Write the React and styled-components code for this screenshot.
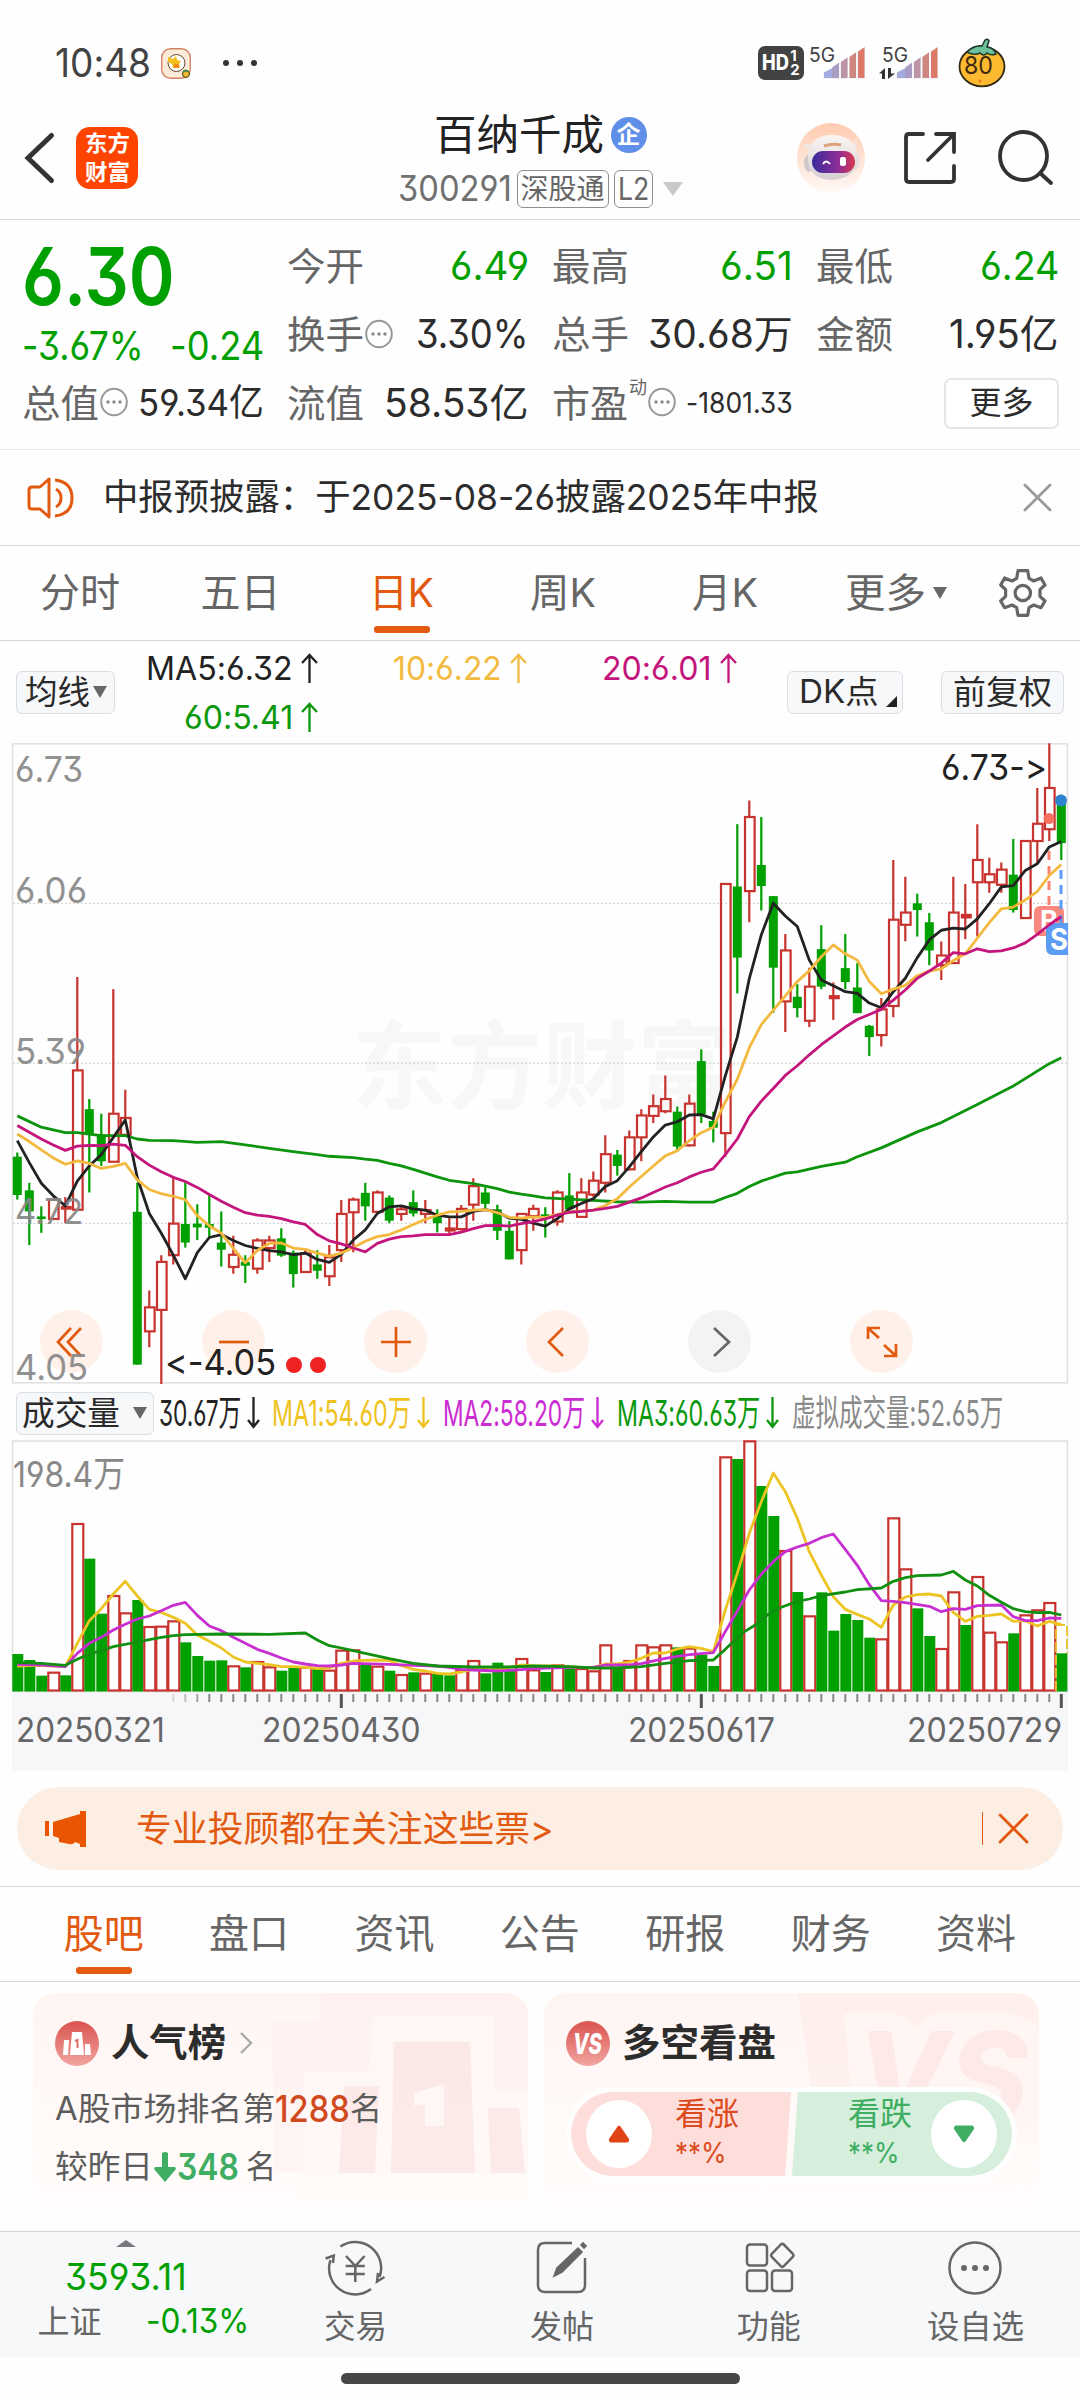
import React, { useLayoutEffect, useRef, useState } from "react";
import styled, { createGlobalStyle } from "styled-components";

const GREEN = "#00a000";
const ORANGE = "#e25a10";
const RED = "#c8332f";
const GREY = "#666";
const FONT = `Inter, "Noto Sans CJK SC", sans-serif`;

const GlobalStyle = createGlobalStyle`
  * { box-sizing: border-box; }
  body {
    margin: 0;
    background: #fff;
    color: #2c2c2c;
    font-family: ${FONT};
    font-feature-settings: "cv03", "cv04", "cv09", "calt" 0;
    font-weight: 400;
  }
  svg { display: block; flex: none; overflow: visible; }
`;

const Screen = styled.div`
  width: 1080px;
  height: 2400px;
  overflow: hidden;
  background: #fefefe;
`;

const FitBox = styled.span`
  display: block;
  flex: none;
  width: ${p => p.$w}px;
  height: 1.3em;
  line-height: 1.3em;
  font-size: ${p => p.$s}px;
  font-weight: ${p => p.$b || 400};
  color: ${p => p.$c || "inherit"};
  white-space: nowrap;
`;

const FitInner = styled.span`
  display: inline-block;
  transform-origin: 0 50%;
`;

// one line of text squeezed or stretched to the width of its slot
const Fit = ({ w, s, c, b, children }) => {
  const ref = useRef(null);
  const [scale, setScale] = useState(1);
  useLayoutEffect(() => {
    setScale(w / ref.current.offsetWidth);
  }, [w, children]);
  return (
    <FitBox $w={w} $s={s} $c={c} $b={b}>
      <FitInner ref={ref} style={{ transform: `scaleX(${scale})` }}>
        {children}
      </FitInner>
    </FitBox>
  );
};

const Flex = styled.div`
  display: flex;
  align-items: center;
  gap: ${p => p.$gap || 0}px;
  margin-left: ${p => p.$ml || 0}px;
`;

/* ---------- status bar ---------- */

const StatusBar = styled.div`
  display: flex;
  align-items: center;
  justify-content: space-between;
  height: 100px;
  padding: 26px 74px 0 55px;
  color: #424242;
`;

const HdBadge = styled.div`
  display: flex;
  align-items: center;
  justify-content: center;
  gap: 1px;
  width: 46px;
  height: 34px;
  border-radius: 7px;
  background: #424242;
  color: #fff;
`;

const HdDigits = styled.div`
  font-size: 15px;
  line-height: 14px;
  font-weight: 700;
`;

const Signals = styled(Flex)`
  gap: 16px;
  margin: 0 19px 0 5px;
`;

const barColors = ["#a3abe0", "#ab9cc6", "#bd93a8", "#cf8580", "#de7868"];

const Signal = ({ data }) => (
  <svg width="57" height="34" viewBox="0 0 57 34">
    <text x="0" y="16" fontSize="20" fill="#424242" textLength="26" lengthAdjust="spacingAndGlyphs">5G</text>
    {data && <path d="M-3 27.500l6-5.500v11h-3v-5.500zM6 22h3v5.500h4l-7 5.500z" fill="#333" />}
    {barColors.map((c, i) => (
      <path
        key={c}
        d={`M${15 + i * 8.5} 32V${26.5 - i * 5.2}l${i === 0 ? 9 : 6.5}-4.500V32z`}
        fill={c}
        stroke="#9993"
      />
    ))}
  </svg>
);

const AppBubble = () => (
  <svg width="30" height="31" viewBox="0 0 30 31">
    <rect x=".7" y=".7" width="28.600" height="29.600" rx="9" fill="#fdebd9" stroke="#cf8468" strokeWidth="1.400" />
    <circle cx="15.500" cy="15" r="8.500" fill="#fff" stroke="#6b4436" strokeWidth="1" />
    <path d="M7 9l5 2 3-3 1 4 4 1-2 3 1 4h-7l-1-4-4-2z" fill="#f5bd1c" />
    <rect x="13" y="16" width="5" height="4" fill="#f08a1a" />
    <circle cx="25" cy="26" r="3.500" fill="#f2b632" stroke="#473c17" />
    <path d="M22 24q3-3 5 0" stroke="#3a8a4b" strokeWidth="2" fill="none" />
  </svg>
);

const Battery = () => (
  <svg width="48" height="50" viewBox="0 0 48 50">
    <ellipse cx="24" cy="28.500" rx="22.500" ry="19.800" fill="#fdb92f" stroke="#332a14" strokeWidth="1.800" />
    <path d="M9 14q7-7 15-6l3-6q3-2 4 1l-2 6q7 1 9 7-5 2-9-1-3 4-7 0-6 3-13-1z" fill="#6cc09a" stroke="#22382c" strokeWidth="1.500" />
    <circle cx="22" cy="43" r="1.500" fill="#f07b1c" />
    <circle cx="12" cy="35" r="1.500" fill="#f07b1c" />
    <text x="6" y="36" fontSize="24" fill="#3d2a10" textLength="29" lengthAdjust="spacingAndGlyphs">80</text>
  </svg>
);

/* ---------- header ---------- */

const Header = styled.header`
  display: flex;
  align-items: center;
  height: 120px;
  padding-bottom: 3px;
  border-bottom: 1px solid #d6d6d6;
`;

const HeaderLeft = styled(Flex)`
  width: 300px;
  padding-left: 24px;
  gap: 21px;
`;

const HeaderRight = styled(Flex)`
  width: 300px;
  padding-left: 17px;
`;

const HeaderTitle = styled.div`
  width: 480px;
  padding-top: 8px;
`;

const TitleLine = styled(Flex)`
  height: 54px;
  justify-content: center;
`;

const Logo = styled.div`
  display: flex;
  flex-direction: column;
  align-items: center;
  justify-content: center;
  width: 62px;
  height: 62px;
  border-radius: 14px;
  background: #ff4400;
  color: #fff;
`;

const CorpBadge = styled.div`
  display: flex;
  align-items: center;
  justify-content: center;
  width: 36px;
  height: 36px;
  margin-left: 7px;
  border-radius: 50%;
  background: #5f8fe8;
  color: #fff;
`;

const Tag = styled.div`
  display: flex;
  align-items: center;
  justify-content: center;
  width: ${p => p.$w}px;
  height: 38px;
  margin-left: 5px;
  border: 1.500px solid #8f8f8f;
  border-radius: 6px;
`;

const Triangle = styled.i`
  flex: none;
  width: 0;
  height: 0;
  border: solid transparent;
  border-width: ${p => p.$h}px ${p => p.$w / 2}px 0;
  border-top-color: ${p => p.$c || GREY};
  margin-left: ${p => p.$ml || 0}px;
`;

const Robot = () => (
  <svg width="68" height="70" viewBox="0 0 68 70">
    <defs>
      <linearGradient id="rbg" x1="0" y1="0" x2="0" y2="1">
        <stop offset="0" stopColor="#ffcbb0" />
        <stop offset="1" stopColor="#fff9f6" />
      </linearGradient>
      <linearGradient id="visor">
        <stop offset="0" stopColor="#3a2d9c" />
        <stop offset=".6" stopColor="#8b2c96" />
        <stop offset="1" stopColor="#d93850" />
      </linearGradient>
      <linearGradient id="helmet" x1="0" y1="0" x2="0" y2="1">
        <stop offset="0" stopColor="#fbf6f3" />
        <stop offset="1" stopColor="#d5cfd2" />
      </linearGradient>
    </defs>
    <ellipse cx="34" cy="35" rx="34" ry="35" fill="url(#rbg)" />
    <path d="M7 20q0 7 6 8l5-7q-6 2-11-1zM59 15q-1 6-7 6l4 8q6-5 3-14z" fill="#f3e6e0" />
    <ellipse cx="12" cy="40" rx="5" ry="9" fill="#cfc8cc" />
    <ellipse cx="58" cy="38" rx="5" ry="9" fill="#e9dedd" />
    <path d="M11 36q0-23 23-24 25 0 26 22 1 21-25 23-24-1-24-21z" fill="url(#helmet)" />
    <rect x="15" y="28" width="43" height="22" rx="11" fill="url(#visor)" />
    <path d="M26 41q3-5 7 0" stroke="#fff" strokeWidth="2" fill="none" />
    <rect x="43" y="34" width="6" height="9" rx="2" fill="#fff" />
    <path d="M27 23q9-3 17-1" stroke="#dca179" strokeWidth="3" fill="none" />
  </svg>
);

/* ---------- quote ---------- */

const Quote = styled.section`
  display: grid;
  grid-template-columns: 242px 242px 241px 243px;
  grid-template-rows: repeat(3, 68.500px);
  column-gap: 23px;
  height: 230px;
  padding: 12px 21px 0 22px;
  border-bottom: 1px solid #ebebeb;
`;

const PriceCell = styled.div`
  grid-row: span 2;
  color: ${GREEN};
`;

const PriceLine = styled(Flex)`
  justify-content: space-between;
  height: ${p => p.$h}px;
`;

const Cell = styled(Flex)`
  justify-content: space-between;
`;

const Sup = styled.span`
  align-self: flex-start;
  margin: -3px 0 0 1px;
`;

const MoreButton = styled.button`
  display: flex;
  align-items: center;
  justify-content: center;
  width: 115px;
  height: 51px;
  margin-left: auto;
  border: 2px solid #e6e6e8;
  border-radius: 7px;
  background: #fff;
  color: #2c2c2c;
  font: inherit;
`;

const Hint = () => (
  <svg width="28" height="30" viewBox="0 0 28 30">
    <ellipse cx="15" cy="14" rx="12.800" ry="13.300" fill="none" stroke="#999" strokeWidth="2" />
    <circle cx="9" cy="14" r="1.700" fill="#888" />
    <circle cx="15" cy="14" r="1.700" fill="#888" />
    <circle cx="21" cy="14" r="1.700" fill="#888" />
  </svg>
);

const quoteCells = [
  { label: "今开", value: "6.49", w: 79, color: GREEN },
  { label: "最高", value: "6.51", w: 73, color: GREEN },
  { label: "最低", value: "6.24", w: 79, color: GREEN },
  { label: "换手", value: "3.30%", w: 113, hint: true },
  { label: "总手", value: "30.68万", w: 145 },
  { label: "金额", value: "1.95亿", w: 110 },
  { label: "总值", value: "59.34亿", w: 126, size: 37, hint: true },
  { label: "流值", value: "58.53亿", w: 145 }
];

/* ---------- notice and tabs ---------- */

const Notice = styled.section`
  display: flex;
  align-items: center;
  height: 96px;
  padding: 0 28px 0 27px;
  border-bottom: 1px solid #d6d6d6;
`;

const NoticeText = styled.div`
  flex: 1;
  padding-left: 28px;
`;

const Periods = styled.nav`
  display: flex;
  height: 95px;
  border-bottom: 1px solid #d6d6d6;
  color: ${GREY};
`;

const Tab = styled.div`
  position: relative;
  display: flex;
  align-items: center;
  justify-content: center;
  width: ${p => p.$w}px;
  color: ${p => (p.$active ? ORANGE : GREY)};
  &::after {
    content: "";
    display: ${p => (p.$active ? "block" : "none")};
    position: absolute;
    bottom: 7.500px;
    left: calc(50% - 28px);
    width: 56px;
    height: 6.500px;
    border-radius: 3px;
    background: ${ORANGE};
  }
`;

const MorePeriods = styled(Flex)`
  width: 155px;
  margin-left: 40px;
`;

const GearIcon = styled.svg`
  align-self: center;
`;

const Gear = () => (
  <GearIcon width="47" height="50" viewBox="0 0 47 50" fill="none" stroke="#666" strokeWidth="3.200">
    <path
      d="M18 2.700H27.700L29 10.300L33.700 13L41 10L45 17L40 21.700V28.300L45 33L41 39.700L33.700 37L29 39.700L27.700 47.300H18L16.700 39.700L12 37L4.600 39.700L.7 33L5.600 28.300V21.700L.7 17L4.600 10L12 13L16.700 10.300Z"
      strokeLinejoin="round"
    />
    <circle cx="22.800" cy="25" r="7.700" />
  </GearIcon>
);

const Cross = ({ size, color, stroke }) => (
  <svg width={size} height={size} viewBox="0 0 30 30">
    <path d="M2 2l26 26M28 2L2 28" stroke={color} strokeWidth={stroke} strokeLinecap="round" />
  </svg>
);

/* ---------- moving averages bar ---------- */

const MaBar = styled.section`
  display: flex;
  align-items: center;
  height: 102px;
  padding: 0 16px;
`;

const Chip = styled.button`
  display: flex;
  align-items: center;
  flex: none;
  width: ${p => p.$w}px;
  height: 43px;
  padding: 0 0 0 ${p => p.$pl}px;
  margin-left: ${p => p.$ml || 0}px;
  border: 1.500px solid #dbdee2;
  border-radius: 6px;
  background: #f7f8fa;
  color: #2a2a2a;
  font: inherit;
`;

const Corner = styled.i`
  margin: 19px 0 0 9px;
  border: solid transparent;
  border-width: 0 0 11px 11px;
  border-bottom-color: #222;
`;

const MaLegend = styled.div`
  display: grid;
  grid-template-columns: 203px 209px 210px;
  grid-auto-rows: 49px;
  align-items: center;
  justify-items: end;
  padding-top: 1px;
`;

const LegendItem = styled(Flex)`
  color: ${p => p.$c};
`;

const Arrow = ({ down, w, h }) => (
  <svg width={w} height={h} viewBox={`0 0 ${w} ${h}`}>
    <path
      d={down ? `M${w / 2} 0V${h - 2}M1 ${h - 9}L${w / 2} ${h - 2}L${w - 1} ${h - 9}` : `M${w / 2} ${h}V2M1 10L${w / 2} 2L${w - 1} 10`}
      fill="none" stroke="currentColor" strokeWidth="2.300"
    />
  </svg>
);

const maLegend = [
  { text: "MA5:6.32", w: 147, c: "#222" },
  { text: "10:6.22", w: 109, c: "#f3ba42" },
  { text: "20:6.01", w: 110, c: "#c4157c" },
  { text: "60:5.41", w: 109, c: "#0c980c" }
];

/* ---------- candle chart ---------- */

// kind, high, body top, body bottom, low
const candles = `g 980 990 1081 1092|g 1052 1070 1120 1200|g 1108 1132 1138 1171|r 1092 1092 1138 1138|s 1086 1107 1116 1148
r 563 785 1116 1116|g 853 877 935 1075|g 888 937 1001 1012|r 592 888 1002 1002|r 831 898 938 938
g 1052 1121 1484 1484|r 1308 1348 1405 1443|r 1224 1240 1354 1530|r 1040 1149 1224 1246|g 1050 1150 1194 1206
g 1103 1149 1158 1188|g 1080 1150 1159 1182|g 1120 1194 1211 1251|r 1178 1223 1252 1268|g 1224 1240 1249 1290
r 1184 1189 1256 1268|r 1178 1189 1207 1240|g 1160 1184 1225 1228|g 1213 1218 1269 1301|r 1208 1220 1264 1264
g 1212 1246 1261 1280|r 1200 1229 1274 1297|r 1093 1126 1212 1240|r 1087 1092 1122 1217|g 1052 1076 1108 1142
r 1070 1075 1121 1121|g 1082 1087 1142 1148|r 1109 1115 1126 1142|g 1070 1098 1125 1132|r 1093 1117 1126 1148
g 1115 1132 1148 1170|s 1136 1158 1168 1176|r 1105 1114 1162 1166|r 1041 1060 1104 1142|g 1063 1075 1102 1115
g 1104 1115 1166 1188|g 1143 1166 1234 1234|r 1125 1126 1212 1246|r 1104 1114 1131 1166|g 1110 1127 1131 1182
r 1070 1075 1144 1154|g 1029 1082 1115 1115|r 1041 1075 1133 1133|r 1025 1047 1080 1085|r 939 984 1052 1075
g 974 985 1012 1035|r 928 944 1020 1023|r 877 892 944 1001|r 842 870 893 910|r 797 853 882 887
g 871 883 966 974|r 842 864 963 966|g 735 763 889 910|g 883 905 921 956|r 340 342 934 990
g 200 348 517 602|r 144 183 359 433|g 183 297 347 405|g 371 371 541 648|r 461 500 621 694
g 580 610 637 659|r 541 586 667 682|g 440 497 586 592|s 576 606 616 665|g 461 542 575 592
g 530 588 649 649|g 677 679 706 751|r 613 640 701 728|r 285 427 632 659|r 325 410 439 478
g 365 388 404 467|g 411 433 500 535|r 479 512 535 570|r 325 410 530 530|s 342 413 424 473
r 200 285 338 467|r 280 319 338 363|r 291 308 344 363|g 235 320 404 410|r 240 240 423 423
r 114 199 240 292|r 8 114 212 240|g 130 150 245 285`
  .split(/[|\n]/)
  .map(row => {
    const [kind, ...v] = row.split(" ");
    return { kind, v: v.map(Number) };
  });

const ma5 = [952,1004,1053,1083,1107,1048,1012,985,944,903,1040,1125,1172,1224,1280,1218,1182,1175,1189,1201,1208,1213,1216,1223,1219,1234,1241,1222,1188,1164,1125,1109,1107,1114,1117,1129,1133,1133,1120,1116,1121,1136,1139,1148,1155,1137,1114,1101,1090,1061,1047,1014,978,943,915,907,891,890,900,798,706,567,463,388,418,443,523,570,584,598,602,625,636,598,566,517,475,452,447,449,425,389,349,346,310,294,254,241];
const ma10 = [936,954,974,993,1008,1000,1006,1018,1013,1006,1045,1068,1078,1084,1092,1130,1154,1172,1208,1242,1213,1196,1195,1207,1210,1219,1226,1219,1206,1191,1180,1175,1164,1151,1139,1129,1121,1120,1117,1116,1123,1134,1136,1133,1135,1127,1122,1119,1117,1106,1090,1062,1037,1012,988,976,952,933,920,860,806,731,676,642,608,574,548,515,487,508,523,574,603,592,583,560,549,544,524,508,471,434,401,397,380,360,322,296];
const ma20 = [916,932,948,962,975,965,963,964,960,963,990,1010,1026,1039,1049,1063,1080,1096,1110,1123,1129,1132,1137,1145,1151,1175,1190,1197,1207,1216,1196,1186,1180,1178,1175,1175,1175,1169,1161,1154,1153,1155,1149,1144,1138,1129,1122,1120,1117,1113,1108,1098,1088,1075,1062,1052,1038,1027,1019,985,948,895,858,828,797,774,748,724,703,682,664,652,640,618,594,566,549,530,505,508,496,503,501,494,482,462,439,420];
const ma60 = [[0,893],[2,920],[4,933],[5,933],[7,940],[9,940],[10,948],[11,951],[13,952],[15,956],[17,954],[19,962],[21,970],[23,978],[25,985],[26,989],[28,992],[29,996],[30,999],[31,1006],[32,1012],[33,1020],[34,1029],[35,1038],[36,1046],[38,1054],[39,1060],[40,1066],[41,1074],[42,1079],[43,1083],[44,1088],[46,1091],[48,1094],[50,1097],[52,1098],[54,1096],[56,1098],[58,1098],[59,1087],[60,1077],[61,1061],[62,1048],[64,1029],[65,1026],[67,1013],[69,1003],[70,990],[72,969],[75,931],[77,909],[80,866],[83,822],[86,769],[87,755]];

const volumes = [822,840,887,878,886,432,536,701,648,700,660,741,740,724,787,828,842,841,859,862,846,862,872,860,863,866,872,812,811,850,860,872,885,877,881,882,886,872,843,880,848,872,837,871,876,856,865,867,874,796,860,843,796,802,796,802,806,824,858,232,237,184,318,408,513,636,709,637,752,702,720,773,778,415,568,685,768,807,637,735,591,758,787,760,706,691,669,820];
const vma1 = [858,857,857,858,860,790,722,686,642,604,648,688,697,712,730,765,784,804,831,846,850,854,860,860,862,866,864,850,843,841,840,842,856,868,873,880,882,876,868,868,870,862,855,858,858,858,860,862,862,852,852,846,835,819,819,807,800,805,815,690,580,460,365,279,335,415,515,585,650,688,703,717,742,675,651,644,642,648,697,724,709,706,702,724,722,738,724,734];
const vma2 = [[0,853],[2,855],[4,860],[5,820],[6,790],[7,772],[8,750],[9,733],[10,717],[11,708],[12,692],[13,676],[14,667],[15,706],[16,738],[17,752],[18,772],[19,790],[20,808],[21,820],[22,834],[23,846],[24,852],[25,857],[26,858],[27,855],[28,850],[31,853],[33,856],[35,858],[36,862],[37,868],[38,870],[40,873],[42,869],[43,866],[46,862],[48,862],[49,855],[51,855],[52,851],[54,835],[55,829],[56,824],[58,818],[59,755],[60,693],[61,630],[62,583],[63,545],[64,515],[65,501],[66,490],[67,473],[68,462],[69,508],[70,556],[71,614],[72,662],[73,664],[74,668],[76,679],[77,695],[78,686],[79,688],[80,677],[82,675],[83,710],[84,722],[85,722],[86,714],[87,715]];
const vma3 = [[0,848],[2,850],[4,856],[5,838],[6,822],[7,812],[8,800],[10,786],[11,779],[12,772],[13,767],[14,764],[17,762],[21,763],[24,759],[25,780],[26,797],[27,804],[28,812],[29,820],[31,836],[33,850],[35,858],[38,861],[41,861],[43,858],[46,860],[48,864],[50,864],[52,860],[54,850],[56,842],[58,840],[59,808],[60.5,757],[61.5,735],[62.5,705],[63.5,684],[65,664],[66,657],[67,647],[69,636],[70,629],[72,624],[73,604],[74,593],[75,587],[77,585],[78,574],[79,600],[80,618],[81,646],[82,667],[83,686],[84,695],[85,698],[86,697],[87,705]];

const cx = i => 17.3 + i * 12;
const py = v => v * 0.4209 - 3;
const vy = v => v / 3 - 60;
const points = (list, y) =>
  list.map((p, i) => (Array.isArray(p) ? `${cx(p[0])},${y(p[1])}` : `${cx(i)},${y(p)}`)).join(" ");

const ChartBox = styled.section`
  position: relative;
  height: 641px;
`;

const Line = styled.polyline`
  fill: none;
  stroke-width: 2.800px;
  stroke-linejoin: round;
`;

const ControlRow = styled.div`
  position: absolute;
  left: 40px;
  bottom: 11px;
  display: flex;
  gap: 99px;
`;

const Round = styled.div`
  display: flex;
  align-items: center;
  justify-content: center;
  width: 63px;
  height: 63px;
  border-radius: 50%;
  background: ${p => (p.$off ? "#f3f3f3" : "#fff1e9")};
  color: ${p => (p.$off ? "#666" : ORANGE)};
`;

const controls = [
  { d: "M15 2L2 16L15 30M25 2L12 16L25 30" },
  { d: "M1 16H31" },
  { d: "M1 16H31M16 1V31" },
  { d: "M21 2L7 16L21 30" },
  { d: "M10 2L25 16L10 30", off: true },
  { d: "M2 13V2H14M3 3L13 12M18 19L29 29M30 18V30H18" }
];

const Controls = () => (
  <ControlRow>
    {controls.map(({ d, off }) => (
      <Round key={d} $off={off}>
        <svg width="32" height="32" viewBox="0 0 32 32">
          <path d={d} fill="none" stroke="currentColor" strokeWidth="2.700" />
        </svg>
      </Round>
    ))}
  </ControlRow>
);

const ChartText = ({ x, y, w, s = 36, fill = "#888", children, ...rest }) => (
  <text x={x} y={y} fontSize={s} fill={fill} textLength={w} lengthAdjust="spacingAndGlyphs" {...rest}>
    {children}
  </text>
);

const Candle = ({ i, kind, v }) => {
  const [high, top, bottom, low] = v.map(py);
  const x = cx(i);
  const color = kind === "g" ? GREEN : RED;
  if (kind === "r") {
    return (
      <g stroke={color} strokeWidth="2.200" fill="none">
        <path d={`M${x} ${high}V${top}M${x} ${bottom}V${low}`} />
        <rect x={x - 4.3} y={top} width="9.600" height={Math.max(bottom - top, 1)} />
      </g>
    );
  }
  return (
    <g fill={color}>
      <rect x={x - 1.1} y={high} width="2.200" height={low - high} />
      <rect x={x - 4.5} y={top} width={kind === "s" ? 11 : 9} height={bottom - top} />
    </g>
  );
};

const KChart = () => (
  <svg width="1080" height="641" viewBox="0 0 1080 641">
    <text x="352" y="358" fontSize="96" fontWeight="700" fill="#f7f7f7" textLength="380" lengthAdjust="spacingAndGlyphs">东方财富</text>
    {[160.3, 320.2, 480.3].map(y => (
      <path key={y} d={`M13 ${y}H1067`} stroke="#ccc" strokeWidth="1" strokeDasharray="2 2" />
    ))}
    <rect x="12.500" y=".8" width="1055" height="639" fill="none" stroke="#e2e2e2" strokeWidth="1.600" />
    {candles.map((c, i) => <Candle key={i} i={i} {...c} />)}
    <path d="M1049 108V164" stroke="#f98272" strokeWidth="3" strokeDasharray="9 6" />
    <rect x="1034" y="163" width="30" height="30" rx="6" fill="#f87b70" opacity=".9" />
    <ChartText x="1040" y="188" w="18" s="29" fill="#fff" fontWeight="700">B</ChartText>
    <path d="M1068 180h-15q-7 0-7 7v18q0 7 7 7h15z" fill="#5c9cf5" />
    <path d="M1061 127V184" stroke="#5c9cf5" strokeWidth="3" strokeDasharray="9 6" />
    <ChartText x="1050" y="207" w="18" s="30" fill="#fff" fontWeight="700">S</ChartText>
    <Line points={points(ma60, py)} stroke="#0c940c" />
    <Line points={points(ma5, py)} stroke="#222" />
    <Line points={points(ma10, py)} stroke="#f3b93f" />
    <Line points={points(ma20, py)} stroke="#c4157c" />
    <circle cx="1049" cy="75.500" r="5.500" fill="#f8705f" />
    <circle cx="1061" cy="57.500" r="6" fill="#2f83cf" />
    <g opacity=".92">
      <ChartText x="15" y="39" w="68">6.73</ChartText>
      <ChartText x="15" y="160" w="72">6.06</ChartText>
      <ChartText x="15" y="321" w="71">5.39</ChartText>
      <ChartText x="15" y="481" w="68">4.72</ChartText>
    </g>
    <ChartText x="941" y="37" w="106" fill="#222">6.73-&gt;</ChartText>
  </svg>
);

// labels that stay above the round buttons
const ChartOverlay = styled.svg`
  position: absolute;
  left: 0;
  bottom: 0;
`;

/* ---------- volume ---------- */

const VolumeBar = styled.section`
  display: flex;
  align-items: center;
  height: 56px;
  padding: 2px 0 0 16px;
`;

const VolumeLegend = styled(Flex)`
  gap: 6px;
  margin-left: ${p => p.$ml}px;
  color: ${p => p.$c};
`;

const volumeLegend = [
  { text: "30.67万", w: 82, c: "#222", ml: 5 },
  { text: "MA1:54.60万", w: 139, c: "#efc31f", ml: 12 },
  { text: "MA2:58.20万", w: 142, c: "#cb2cd3", ml: 13 },
  { text: "MA3:60.63万", w: 143, c: "#0c980c", ml: 13 }
];

const VolumeChart = () => (
  <svg width="1080" height="252" viewBox="0 0 1080 252">
    <rect x="12.500" y="1" width="1055" height="250.500" fill="none" stroke="#e2e2e2" strokeWidth="1.600" />
    {volumes.map((v, i) =>
      candles[i].kind === "r" ? (
        <rect key={i} x={cx(i) - 5} y={vy(v)} width="11" height={250.5 - vy(v)} fill="#fff" stroke={RED} strokeWidth="2.200" />
      ) : (
        <rect key={i} x={cx(i) - 5} y={vy(v)} width="11" height={251.5 - vy(v)} fill={GREEN} />
      )
    )}
    <path d="M1056 251V185H1067V213" fill="none" stroke="#eec32a" strokeWidth="1.800" strokeDasharray="10 3" />
    <Line points={points(vma1, vy)} stroke="#ecc524" />
    <Line points={points(vma2, vy)} stroke="#c72fd0" />
    <Line points={points(vma3, vy)} stroke="#108f10" />
    <ChartText x="13" y="47" w="112" s="36">198.4万</ChartText>
  </svg>
);

const TimeAxis = styled.section`
  height: 79px;
  margin: 0 12px;
  background: #f7f7fa;
`;

const Dates = styled.div`
  display: flex;
  align-items: center;
  height: 44px;
  padding-left: 4px;
  color: ${GREY};
`;

const Ticks = () => (
  <svg width="1056" height="16" viewBox="0 0 1056 16">
    {candles.map((_, i) => {
      if (i < 13) return null;
      const major = i === 27 || i === 57 || i === 87;
      return (
        <rect
          key={i}
          x={cx(i) - 12 - (major ? 1.5 : 1)}
          y="2"
          width={major ? 3 : 2}
          height={major ? 14 : 8}
          fill={major ? "#555" : "#888"}
          opacity={Math.min(1, (i - 12) * 0.25)}
        />
      );
    })}
  </svg>
);

/* ---------- promo, section tabs, cards ---------- */

const Promo = styled.section`
  display: flex;
  align-items: center;
  height: 83px;
  margin: 16px 17px;
  padding: 0 34px 0 27px;
  border-radius: 42px;
  background: #fdeee4;
  color: ${ORANGE};
`;

const PromoText = styled.div`
  flex: 1;
  padding: 1px 0 0 49px;
`;

const Divider = styled.i`
  width: 1.500px;
  height: 33px;
  margin-right: 15px;
  background: ${ORANGE};
`;

const Sections = styled.nav`
  display: flex;
  height: 96px;
  padding-left: 31px;
  border-top: 1px solid #d6d6d6;
  border-bottom: 1px solid #d6d6d6;
`;

const Cards = styled.section`
  display: flex;
  gap: 16px;
  height: 249px;
  padding: 11px 33px 0;
`;

const Card = styled.div`
  position: relative;
  width: 495px;
  height: 220px;
  padding: 28px 22px;
  border-radius: 22px;
  overflow: hidden;
  background: linear-gradient(#fff5f3, #fffdfc);
  color: #5c5c5c;
`;

const CardArt = styled.svg`
  position: absolute;
  top: 0;
  right: 0;
`;

const CardHead = styled(Flex)`
  position: relative;
  height: 44px;
  gap: 12px;
  color: #2c2c2c;
`;

const CardLine = styled(Flex)`
  position: relative;
  height: 58px;
  margin-top: ${p => p.$mt || 0}px;
`;

const VotePill = styled.div`
  position: relative;
  display: flex;
  width: 451px;
  height: 94px;
  margin-top: 22px;
  border: 5px solid rgba(255, 255, 255, 0.8);
  border-radius: 47px;
  background: #fff9f8;
  overflow: hidden;
`;

const Side = styled.div`
  display: flex;
  align-items: center;
  width: 220px;
  padding: 0 15px;
  color: ${p => p.$c};
  background: ${p => p.$bg};
  clip-path: ${p => p.$clip};
  margin-left: ${p => p.$ml || 0}px;
  justify-content: ${p => (p.$end ? "flex-end" : "flex-start")};
  gap: ${p => (p.$end ? 19 : 23)}px;
`;

const Knob = styled.div`
  display: flex;
  align-items: center;
  justify-content: center;
  width: 66px;
  height: 68px;
  border-radius: 50%;
  background: #fff;
`;

const VoteText = styled.div`
  display: flex;
  flex-direction: column;
  margin-top: -3px;
`;

const sectionTabs = ["股吧", "盘口", "资讯", "公告", "研报", "财务", "资料"];

/* ---------- bottom bar ---------- */

const BottomBar = styled.footer`
  display: flex;
  height: 126px;
  border-top: 1px solid #d3d5d8;
  background: #f7f8fa;
  color: ${GREY};
`;

const IndexBox = styled.div`
  display: flex;
  flex-direction: column;
  align-items: center;
  width: 252px;
  padding-top: 8px;
`;

const UpMark = styled.i`
  border: solid transparent;
  border-width: 0 10px 7px;
  border-bottom-color: #77787c;
`;

const IndexRow = styled(Flex)`
  height: ${p => p.$h}px;
  gap: 44px;
  padding-left: ${p => p.$pl || 0}px;
`;

const Action = styled.div`
  display: flex;
  flex-direction: column;
  align-items: center;
  width: 206.700px;
  padding-top: 8px;
`;

const ActionLabel = styled(Flex)`
  height: 63px;
`;

const HomeBar = styled.div`
  width: 399px;
  height: 11px;
  margin: 16px auto 0;
  border-radius: 6px;
  background: #464646;
`;

const actionIcons = {
  trade: (
    <>
      <path d="M16.400 6.500A26 26 0 0 1 55.500 37M47 49A26 26 0 0 1 6.500 20" />
      <path d="M1.600 18.500L9.800 15.500L9 23M60.500 37L53 41.500L54 33" />
      <path d="M22 16l9.300 10 9.300-10M31.300 26v16M21.600 26h19.200M21.600 34h19.200" />
    </>
  ),
  post: (
    <>
      <path d="M41 3H14Q7 3 7 10V45Q7 52 14 52H47Q54 52 54 45V18" />
      <path d="M23 36l3-8L47 8l4 4L31 32zM50 5l2-2 3 3-2 2z" fill="#666" strokeWidth="1.600" />
    </>
  ),
  apps: (
    <>
      <rect x="9" y="4.500" width="20" height="21" rx="3" />
      <rect x="9" y="30.500" width="20" height="20.500" rx="3" />
      <rect x="34" y="30.500" width="20" height="20.500" rx="3" />
      <path d="M42.800 4.500q1.500-1.500 3 0l9 9.300q1.500 1.500 0 3l-9 9.300q-1.500 1.500-3 0l-9-9.300q-1.500-1.500 0-3z" />
    </>
  ),
  more: (
    <>
      <circle cx="31" cy="28" r="25.500" />
      <g fill="#666" stroke="none">
        <circle cx="20" cy="28" r="3" />
        <circle cx="31" cy="28" r="3" />
        <circle cx="42" cy="28" r="3" />
      </g>
    </>
  )
};

const actions = [
  { icon: "trade", label: "交易", w: 63 },
  { icon: "post", label: "发帖", w: 64 },
  { icon: "apps", label: "功能", w: 64 },
  { icon: "more", label: "设自选", w: 97 }
];

const App = () => (
  <Screen>
    <GlobalStyle />
    <StatusBar>
      <Flex $gap={10}>
        <Fit w={96} s={39}>10:48</Fit>
        <Flex $gap={31}>
          <AppBubble />
          <svg width="36" height="8" viewBox="0 0 36 8" fill="#333">
            <circle cx="4" cy="4" r="3" />
            <circle cx="18" cy="4" r="3" />
            <circle cx="32" cy="4" r="3" />
          </svg>
        </Flex>
      </Flex>
      <Flex>
        <HdBadge>
          <Fit w={27} s={21} b={800}>HD</Fit>
          <HdDigits>1<br />2</HdDigits>
        </HdBadge>
        <Signals>
          <Signal />
          <Signal data />
        </Signals>
        <Battery />
      </Flex>
    </StatusBar>

    <Header>
      <HeaderLeft>
        <svg width="31" height="52" viewBox="0 0 31 52">
          <path d="M27.500 3.500L4 26L27.500 48.500" fill="none" stroke="#333" strokeWidth="5" strokeLinecap="round" />
        </svg>
        <Logo>
          <Fit w={45} s={22} b={700}>东方</Fit>
          <Fit w={45} s={22} b={700}>财富</Fit>
        </Logo>
      </HeaderLeft>
      <HeaderTitle>
        <TitleLine>
          <Fit w={170} s={42} c="#222">百纳千成</Fit>
          <CorpBadge><Fit w={24} s={24} b={700}>企</Fit></CorpBadge>
        </TitleLine>
        <TitleLine>
          <Fit w={114} s={35} c="#707070">300291</Fit>
          <Tag $w={92}><Fit w={84} s={28} c="#666">深股通</Fit></Tag>
          <Tag $w={39}><Fit w={31} s={31} c="#666">L2</Fit></Tag>
          <Triangle $w={20} $h={14} $c="#c9c9c9" $ml={10} />
        </TitleLine>
      </HeaderTitle>
      <HeaderRight>
        <Robot />
        <Flex $gap={38} $ml={37}>
          <svg width="56" height="56" viewBox="0 0 56 56" fill="none" stroke="#333" strokeWidth="3.800" strokeLinecap="round">
            <path d="M21 4H7Q4 4 4 7V49Q4 52 7 52H49Q52 52 52 49V36" />
            <path d="M34 4H52V22M51 5L26 30" />
          </svg>
          <svg width="58" height="58" viewBox="0 0 58 58" fill="none" stroke="#333" strokeWidth="3.800" strokeLinecap="round">
            <ellipse cx="27.500" cy="27" rx="23.500" ry="24" />
            <path d="M44 44L55 54" />
          </svg>
        </Flex>
      </HeaderRight>
    </Header>

    <Quote>
      <PriceCell>
        <PriceLine $h={88}><Fit w={153} s={80} b={600}>6.30</Fit></PriceLine>
        <PriceLine $h={52}>
          <Fit w={122} s={39}>-3.67%</Fit>
          <Fit w={94} s={39}>-0.24</Fit>
        </PriceLine>
      </PriceCell>
      {quoteCells.map(cell => (
        <Cell key={cell.label}>
          <Flex>
            <Fit w={77} s={38} c={GREY}>{cell.label}</Fit>
            {cell.hint && <Hint />}
          </Flex>
          <Fit w={cell.w} s={cell.size || 39} c={cell.color}>{cell.value}</Fit>
        </Cell>
      ))}
      <Cell>
        <Flex>
          <Fit w={76} s={38} c={GREY}>市盈</Fit>
          <Sup><Fit w={18} s={18} c={GREY}>动</Fit></Sup>
          <Hint />
        </Flex>
        <Fit w={107} s={28}>-1801.33</Fit>
      </Cell>
      <Cell>
        <MoreButton><Fit w={64} s={32}>更多</Fit></MoreButton>
      </Cell>
    </Quote>

    <Notice>
      <svg width="48" height="44" viewBox="0 0 48 44" fill="none" stroke={ORANGE} strokeWidth="3">
        <path d="M22 3V41L13 33H5Q2 33 2 30V14Q2 11 5 11H13Z" strokeLinejoin="round" />
        <path d="M29 13Q34 16 34 22T29 31M28 4Q45 6 45 22T28 40" />
      </svg>
      <NoticeText><Fit w={716} s={36}>中报预披露：于2025-08-26披露2025年中报</Fit></NoticeText>
      <Cross size={29} color="#999" stroke={2.8} />
    </Notice>

    <Periods>
      <Tab $w={160}><Fit w={80} s={40}>分时</Fit></Tab>
      <Tab $w={161}><Fit w={80} s={40}>五日</Fit></Tab>
      <Tab $w={161} $active><Fit w={65} s={40}>日K</Fit></Tab>
      <Tab $w={162}><Fit w={66} s={40}>周K</Fit></Tab>
      <Tab $w={161}><Fit w={66} s={40}>月K</Fit></Tab>
      <MorePeriods>
        <Fit w={81} s={40}>更多</Fit>
        <Triangle $w={14} $h={12} $ml={7} />
      </MorePeriods>
      <Gear />
    </Periods>

    <MaBar>
      <Chip $w={99} $pl={8}>
        <Fit w={65} s={33}>均线</Fit>
        <Triangle $w={14} $h={12} $ml={3} />
      </Chip>
      <MaLegend>
        {maLegend.map(({ text, w, c }) => (
          <LegendItem key={text} $c={c} $gap={8}>
            <Fit w={w} s={33}>{text}</Fit>
            <Arrow w={17} h={30} />
          </LegendItem>
        ))}
      </MaLegend>
      <Chip $w={116} $pl={9} $ml={50}><Fit w={80} s={32}>DK点</Fit><Corner /></Chip>
      <Chip $w={123} $pl={11} $ml={38}><Fit w={99} s={33}>前复权</Fit></Chip>
    </MaBar>

    <ChartBox>
      <KChart />
      <Controls />
      <ChartOverlay width="340" height="50" viewBox="0 0 340 50">
        <ChartText x="15" y="46" w="73" opacity=".92">4.05</ChartText>
        <ChartText x="165" y="41" w="111" fill="#222">&lt;-4.05</ChartText>
        <circle cx="294" cy="31" r="8" fill="#f02222" />
        <circle cx="318" cy="31" r="8" fill="#f02222" />
      </ChartOverlay>
    </ChartBox>

    <VolumeBar>
      <Chip $w={138} $pl={5}>
        <Fit w={98} s={33}>成交量</Fit>
        <Triangle $w={14} $h={12} $ml={13} />
      </Chip>
      {volumeLegend.map(item => (
        <VolumeLegend key={item.text} $c={item.c} $ml={item.ml}>
          <Fit w={item.w} s={36}>{item.text}</Fit>
          <Arrow down w={13} h={32} />
        </VolumeLegend>
      ))}
      <VolumeLegend $ml={13} $c="#8a8a8a"><Fit w={211} s={36}>虚拟成交量:52.65万</Fit></VolumeLegend>
    </VolumeBar>
    <VolumeChart />
    <TimeAxis>
      <Ticks />
      <Dates>
        <Fit w={149} s={34}>20250321</Fit>
        <Flex $ml={97}><Fit w={159} s={34}>20250430</Fit></Flex>
        <Flex $ml={207}><Fit w={147} s={34}>20250617</Fit></Flex>
        <Flex $ml={132}><Fit w={155} s={34}>20250729</Fit></Flex>
      </Dates>
    </TimeAxis>

    <Promo>
      <svg width="43" height="38" viewBox="0 0 43 38" fill="#ea5504">
        <path d="M1 11H5V26H1zM9 12L36 4V1H42V37H36V34L31 32Q29 35 25 34L15 32V28L9 26z" />
      </svg>
      <PromoText><Fit w={418} s={36}>专业投顾都在关注这些票&gt;</Fit></PromoText>
      <Divider />
      <Cross size={31} color={ORANGE} stroke={2.8} />
    </Promo>

    <Sections>
      {sectionTabs.map((name, i) => (
        <Tab key={name} $w={145.4} $active={i === 0}><Fit w={80} s={40}>{name}</Fit></Tab>
      ))}
    </Sections>

    <Cards>
      <Card>
        <CardArt width="255" height="220" viewBox="0 0 255 220">
          <path d="M48 0H255V180H0V29H46z" fill="#fdeeec" opacity=".45" />
          <path d="M100 22H221V98H255V205H30V78H96z" fill="#fffaf9" opacity=".6" />
          <g fill="#f9dfdd" opacity=".55">
            <path d="M121 49H197L202 180H118z" />
            <path d="M71 93H106L102 180H66zM215 115H246L252 180H218z" />
          </g>
          <path d="M141 100L171 91V133H152V111L141 113z" fill="#fff7f6" />
        </CardArt>
        <CardHead>
          <svg width="44" height="45" viewBox="0 0 44 45">
            <defs>
              <linearGradient id="coin" x1="0" y1="0" x2="0" y2="1">
                <stop offset="0" stopColor="#d9534f" />
                <stop offset="1" stopColor="#f2a5a0" />
              </linearGradient>
            </defs>
            <ellipse cx="22" cy="22.500" rx="22" ry="22.500" fill="url(#coin)" />
            <path d="M17 11H27L29 34H15zM9 19H14L13 34H8zM30 23H35L36 34H30z" fill="#fff" />
            <path d="M20 20L22.500 19V27" fill="none" stroke="#dd6f6a" strokeWidth="2" />
          </svg>
          <Fit w={115} s={38} b={600}>人气榜</Fit>
          <svg width="15" height="24" viewBox="0 0 15 24">
            <path d="M3 2L13 12L3 22" fill="none" stroke="#aaa" strokeWidth="2.400" />
          </svg>
        </CardHead>
        <CardLine $mt={15}>
          <Fit w={220} s={32}>A股市场排名第</Fit>
          <Fit w={75} s={37} c="#d04a1e" b={500}>1288</Fit>
          <Fit w={32} s={32}>名</Fit>
        </CardLine>
        <CardLine>
          <Fit w={98} s={32}>较昨日</Fit>
          <svg width="24" height="32" viewBox="0 0 24 32">
            <path d="M9 2Q12 0 15 2V16H22L23 18L12 31L1 18L2 16H9z" fill="#3fad62" />
          </svg>
          <Flex $gap={7}>
            <Fit w={62} s={37} c="#3fad62" b={600}>348</Fit>
            <Fit w={30} s={32}>名</Fit>
          </Flex>
        </CardLine>
      </Card>
      <Card>
        <CardArt width="255" height="220" viewBox="0 0 255 220">
          <path d="M14 0H255V130H32z" fill="#ffedea" opacity=".65" />
          <path d="M60 20H112L134 34L150 20H220Q240 22 255 35V150H72z" fill="#fff6f4" opacity=".8" />
          <text x="72" y="128" fontSize="124" fontWeight="800" fontStyle="italic" fill="#fde9e7" textLength="172" lengthAdjust="spacingAndGlyphs">VS</text>
        </CardArt>
        <CardHead>
          <svg width="44" height="45" viewBox="0 0 44 45">
            <ellipse cx="22" cy="22.500" rx="22" ry="22.500" fill="url(#coin)" />
            <text x="7" y="33" fontSize="29" fontWeight="800" fontStyle="italic" fill="#fff" textLength="29" lengthAdjust="spacingAndGlyphs">VS</text>
          </svg>
          <Fit w={154} s={38} b={600}>多空看盘</Fit>
        </CardHead>
        <VotePill>
          <Side $c="#dc4a20" $bg="#fddedb" $clip="polygon(0 0, 100% 0, 97.300% 100%, 0 100%)">
            <Knob>
              <svg width="22" height="18" viewBox="0 0 22 18">
                <path d="M9.500 1.500Q11 0 12.500 1.500L21 14Q21.500 17 19 17.500H3Q.5 17 1 14z" fill="#e04416" />
              </svg>
            </Knob>
            <VoteText>
              <Fit w={64} s={32}>看涨</Fit>
              <Fit w={52} s={29}>**%</Fit>
            </VoteText>
          </Side>
          <Side $ml={1} $end $c="#3fad62" $bg="#d6efdd" $clip="polygon(2.700% 0, 100% 0, 100% 100%, 0 100%)">
            <VoteText>
              <Fit w={64} s={32}>看跌</Fit>
              <Fit w={52} s={29}>**%</Fit>
            </VoteText>
            <Knob>
              <svg width="22" height="18" viewBox="0 0 22 18">
                <path d="M9.500 16.500Q11 18 12.500 16.500L21 4Q21.500 1 19 .5H3Q.5 1 1 4z" fill="#3fad62" />
              </svg>
            </Knob>
          </Side>
        </VotePill>
      </Card>
    </Cards>

    <BottomBar>
      <IndexBox>
        <UpMark />
        <IndexRow $h={60}><Fit w={122} s={37} c={GREEN}>3593.11</Fit></IndexRow>
        <IndexRow $h={29} $pl={34}>
          <Fit w={64} s={32}>上证</Fit>
          <Fit w={103} s={34} c={GREEN}>-0.13%</Fit>
        </IndexRow>
      </IndexBox>
      {actions.map(({ icon, label, w }) => (
        <Action key={icon}>
          <svg width="62" height="57" viewBox="0 0 62 57" fill="none" stroke="#666" strokeWidth="2.500">
            {actionIcons[icon]}
          </svg>
          <ActionLabel><Fit w={w} s={32}>{label}</Fit></ActionLabel>
        </Action>
      ))}
    </BottomBar>
    <HomeBar />
  </Screen>
);

export default App;
